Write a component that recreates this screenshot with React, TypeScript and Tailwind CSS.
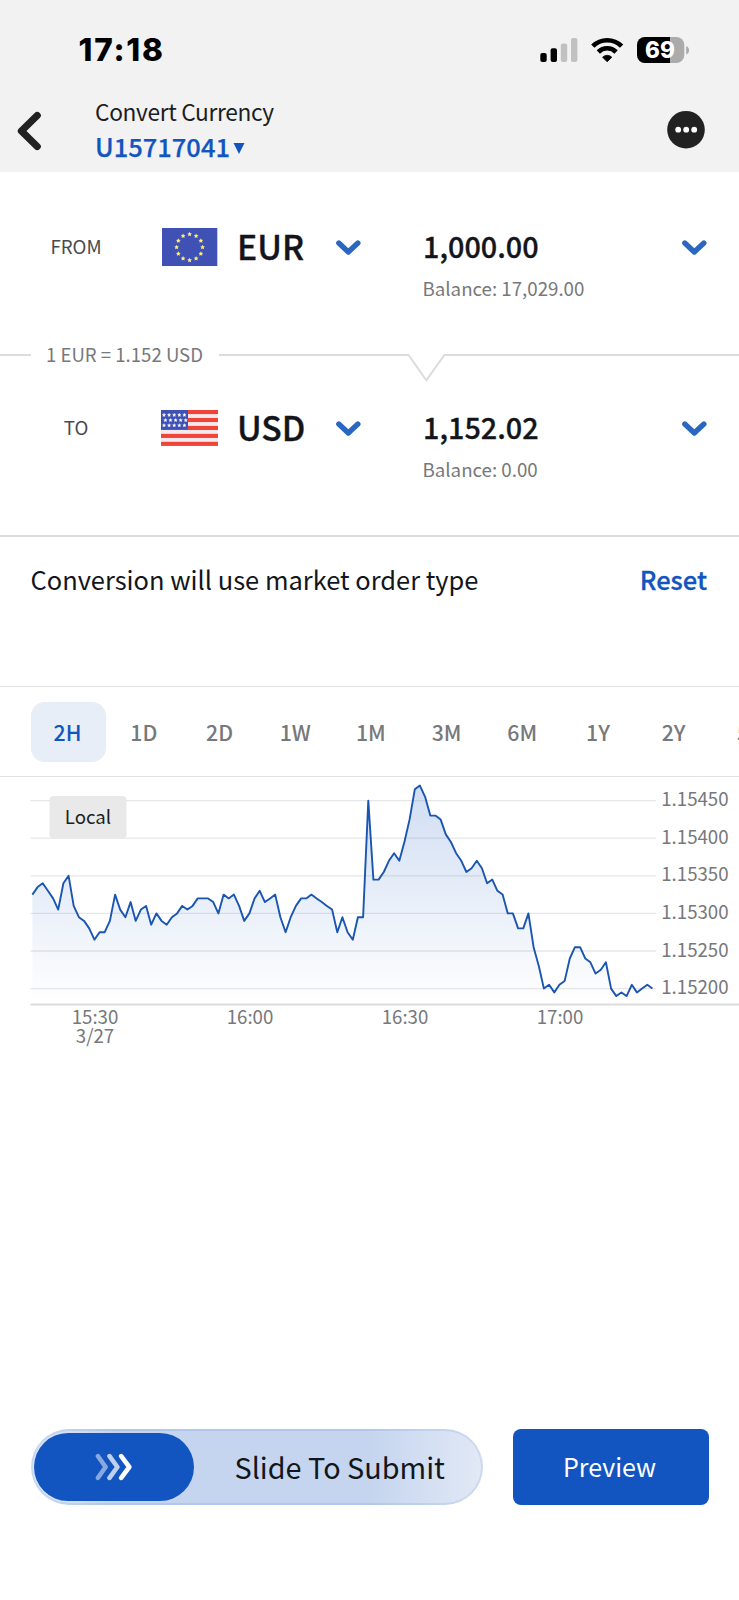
import React from "react";

const ticks = [
  25, 27, 28, 26, 24, 21, 28, 30, 22, 19, 18, 16, 13, 15, 15, 18, 25, 21, 19, 23, 18, 21, 22, 17, 20, 18, 17, 19, 20, 22,
  21, 22, 24, 24, 24, 23, 20, 25, 24, 25, 22, 18, 20, 24, 26, 23, 24, 25, 19, 15, 19, 22, 24, 24, 25, 24, 23, 22, 21, 15,
  19, 15, 13, 19, 19, 50, 29, 29, 31, 34, 36, 34, 39, 45, 53, 54, 51, 46, 46, 45, 41, 39, 36, 34, 31, 32, 34, 32, 28, 29,
  26, 25, 20, 20, 16, 16, 20, 11, 6, 0, 1, -1, 1, 2, 8, 11, 11, 8, 7, 4, 5, 7, 0, -2, -1, -2, 1, -1, 0, 1, 0,
];

const CHART_TOP = 777;
const yOf = (t: number) => 988.6 - CHART_TOP - t * 3.76;
const xOf = (i: number) => 32.4 + i * 5.167;
const line = ticks.map((t, i) => `${xOf(i).toFixed(1)},${yOf(t).toFixed(1)}`).join(" ");
const area = `${xOf(0)},${1004 - CHART_TOP} ${line} ${xOf(120).toFixed(1)},${1004 - CHART_TOP}`;

const priceLabels = ["1.15450", "1.15400", "1.15350", "1.15300", "1.15250", "1.15200"];
const timeLabels = [
  { x: 95, label: "15:30" },
  { x: 250, label: "16:00" },
  { x: 405, label: "16:30" },
  { x: 560, label: "17:00" },
];
const ranges = ["1D", "2D", "1W", "1M", "3M", "6M", "1Y", "2Y"];

function Chevron() {
  return (
    <svg className="mt-px h-[16px] w-[25px] shrink-0" viewBox="0 0 25 16" fill="none">
      <path d="M2.8 3 12.3 12 21.9 3" stroke="#2a67c0" strokeWidth="5.3" strokeLinecap="round" strokeLinejoin="round" />
    </svg>
  );
}

function star(cx: number, cy: number, r: number) {
  return Array.from({ length: 10 }, (_, k) => {
    const a = (Math.PI * k) / 5 - Math.PI / 2;
    const q = k % 2 ? r * 0.5 : r;
    return `${(cx + q * Math.cos(a)).toFixed(2)},${(cy + q * Math.sin(a)).toFixed(2)}`;
  }).join(" ");
}

function EuFlag() {
  return (
    <svg className="h-[38px] w-[57px] shrink-0" viewBox="0 0 57 38">
      <rect x="1" y="0" width="55.3" height="38" fill="#3f51b5" />
      {Array.from({ length: 12 }, (_, k) => {
        const a = (Math.PI * k) / 6;
        return <polygon key={k} points={star(28.6 + 13 * Math.sin(a), 19.2 - 13 * Math.cos(a), 2.5)} fill="#ffee70" />;
      })}
    </svg>
  );
}

function UsFlag() {
  return (
    <svg className="h-[36px] w-[57px] shrink-0" viewBox="0 0 57 36">
      <rect width="57" height="36" fill="#f5e9ee" />
      {[0, 1, 2, 3, 4].map((k) => (
        <rect key={k} y={k * 7.95} width="57" height="4.1" fill="#f04438" />
      ))}
      <rect width="27" height="19.6" fill="#3f51b5" />
      {[0, 1, 2].map((r) =>
        [0, 1, 2, 3, 4].map((c) => (
          <polygon key={`${r}-${c}`} points={star(3 + c * 5.1 + (r === 1 ? 1.4 : 0), 5 + r * 5.2, 1.8)} fill="#fff" stroke="#fff" strokeWidth="0.3" />
        )),
      )}
    </svg>
  );
}

function StatusBar() {
  return (
    <div className="flex h-[99px] items-center pl-[78.5px] pr-[49px]">
      <div className="font-['Inter',sans-serif] text-[31.5px] font-extrabold leading-none tracking-[1.8px] text-black">17:18</div>
      <svg className="ml-auto h-[26px] w-[150px]" viewBox="540 36 150 26">
        <rect x="540.3" y="52" width="6.4" height="9" rx="2" />
        <rect x="550.6" y="47.2" width="6.4" height="13.8" rx="2" />
        <rect x="560.8" y="42.4" width="6.4" height="18.6" rx="2" fill="#c1c1c1" />
        <rect x="571" y="37" width="6.4" height="24" rx="2" fill="#c1c1c1" />
        <g fill="none" stroke="#000" strokeWidth="4.6">
          <path d="M592.8 45.2a20.3 20.3 0 0 1 28.8 0" />
          <path d="M598.3 51a12.6 12.6 0 0 1 17.8 0" />
        </g>
        <path d="M607.2 60.8 602.6 56.2a6.6 6.6 0 0 1 9.2 0Z" stroke="#000" strokeWidth=".8" strokeLinejoin="round" />
        <clipPath id="battery">
          <rect x="637" y="36" width="47.3" height="26" rx="8" />
        </clipPath>
        <g clipPath="url(#battery)">
          <rect x="637" y="36" width="48" height="26" fill="#ababab" />
          <rect x="637" y="36" width="33" height="26" />
        </g>
        <path d="M686.2 45.2c3.8 1 3.8 7.2 0 8.2Z" fill="#ababab" />
        <text x="660" y="57" textAnchor="middle" className="font-['Inter',sans-serif] text-[22.5px] font-extrabold" fill="#fff">69</text>
      </svg>
    </div>
  );
}

function NavBar() {
  return (
    <div className="flex h-[73px] items-start">
      <svg className="ml-[16px] mt-[12px] h-[40px] w-[27px]" viewBox="0 0 27 40" fill="none">
        <path d="M21.2 4.5 5.4 20 21.2 35.5" stroke="#222" strokeWidth="7.2" strokeLinecap="round" strokeLinejoin="round" />
      </svg>
      <div className="ml-[52px] flex flex-col">
        <div className="h-[29px] text-[22.7px] leading-[25px] tracking-[-0.33px] text-[#1c1d22]">Convert Currency</div>
        <div className="flex h-[36px] items-center text-[25.5px] font-medium leading-[36px] text-[#1255c0] [-webkit-text-stroke:0.25px]">
          U15717041
          <svg className="ml-[3px] mt-[4px] h-[11px] w-[12px]" viewBox="0 0 12 11">
            <path d="M.5 0h11L6 11Z" fill="#1255c0" />
          </svg>
        </div>
      </div>
      <svg className="ml-auto mr-[33px] mt-[11px] h-[40px] w-[39px]" viewBox="0 0 39 40">
        <circle cx="19" cy="19.7" r="18.8" fill="#222" />
        <circle cx="11.2" cy="19.7" r="2.9" fill="#fff" />
        <circle cx="19.2" cy="19.7" r="2.9" fill="#fff" />
        <circle cx="27.2" cy="19.7" r="2.9" fill="#fff" />
      </svg>
    </div>
  );
}

function CurrencyRow({ label, flag, code, amount, balance }: { label: string; flag: React.ReactNode; code: string; amount: string; balance: string }) {
  return (
    <div>
      <div className="flex h-[40px] items-center">
        <div className="w-[151px] pb-[2px] pl-px text-center text-[18.7px] text-[#4a4b4f]">{label}</div>
        <div className="ml-[10px]">{flag}</div>
        <div className="ml-[19px] w-[99px] pb-[2px] text-[33.7px] font-medium leading-[40px] [-webkit-text-stroke:0.35px]">{code}</div>
        <Chevron />
        <div className="ml-[62px] pb-[2px] text-[28.8px] font-medium leading-[40px] [-webkit-text-stroke:0.3px]">{amount}</div>
        <div className="ml-auto mr-[32px]">
          <Chevron />
        </div>
      </div>
      <div className="pl-[422.5px] text-[18.7px] leading-[41px] text-[#77787b]">Balance: {balance}</div>
    </div>
  );
}

function RateDivider() {
  return (
    <div className="flex h-[50px] items-center">
      <div className="h-[2px] w-[31px] bg-[#dcdcdc]" />
      <div className="w-[188px] pb-[2px] pr-px text-center text-[18.6px] text-[#77787b]">1 EUR = 1.152 USD</div>
      <svg className="h-[50px] w-[520px] overflow-visible" viewBox="0 0 520 50" fill="none">
        <path d="M0 25H189.5L207.3 50.3 225.5 25H520" stroke="#dcdcdc" strokeWidth="2" />
      </svg>
    </div>
  );
}

function Chart() {
  return (
    <svg className="block h-[290px] w-[739px]" viewBox="0 0 739 290">
      <defs>
        <linearGradient id="fill" gradientUnits="userSpaceOnUse" x1="0" y1="8" x2="0" y2="227">
          <stop offset="0" stopColor="#1255c0" stopOpacity=".2" />
          <stop offset="1" stopColor="#1255c0" stopOpacity="0" />
        </linearGradient>
      </defs>
      {priceLabels.map((p, i) => (
        <g key={p}>
          <path d={`M30.5 ${yOf(50 - i * 10)}H656`} stroke="#e6e7e9" strokeWidth="1.3" />
          <text x="661.2" y={yOf(50 - i * 10) + 5.6} className="text-[18.7px]" fill="#77787b">{p}</text>
        </g>
      ))}
      <polygon points={area} fill="url(#fill)" />
      <path d="M30.5 227.5H739" stroke="#dcdcdc" strokeWidth="2" />
      <polyline points={line} fill="none" stroke="#1a55b0" strokeWidth="1.9" strokeLinejoin="round" />
      <rect x="49.5" y="19" width="77" height="42.5" rx="4" fill="#e9e9e9" />
      <text x="88" y="47" textAnchor="middle" className="text-[18.7px]" fill="#1c1d22">Local</text>
      {timeLabels.map((t) => (
        <text key={t.label} x={t.x} y="247" textAnchor="middle" className="text-[18.7px]" fill="#77787b">{t.label}</text>
      ))}
      <text x="95" y="266" textAnchor="middle" className="text-[18.7px]" fill="#77787b">3/27</text>
    </svg>
  );
}

function Footer() {
  return (
    <div className="flex h-[76px] pl-[31px]">
      <div className="flex w-[452px] items-center rounded-full border-2 border-[#1255c0]/10 bg-[linear-gradient(90deg,#dfe8f6_0%,#c5d5ef_18%,#c5d5ef_75%,#e2e9f6_100%)] bg-origin-border">
        <div className="ml-[1px] flex h-[68px] w-[159.5px] shrink-0 items-center justify-center rounded-full bg-[#1255c0]">
          <svg className="h-[28px] w-[38px]" viewBox="0 0 38 28" fill="none" strokeWidth="4.6" strokeLinecap="round" strokeLinejoin="round">
            <path d="M3 3.2 10.6 14 3 24.8" stroke="#88a9df" />
            <path d="M14.5 3.2 22.4 14 14.5 24.8" stroke="#c0d1ee" />
            <path d="M26.2 3.2 34.3 14 26.2 24.8" stroke="#fff" />
          </svg>
        </div>
        <div className="ml-[41px] pb-px text-[28.8px] leading-[40px] whitespace-nowrap">Slide To Submit</div>
      </div>
      <button className="ml-[30px] flex w-[196px] items-center justify-center rounded-[8px] bg-[#1255c0] pb-px pr-[3px] text-[25px] text-white">Preview</button>
    </div>
  );
}

export default function App() {
  return (
    <div className="h-[1600px] w-[739px] overflow-hidden bg-white font-['Noto_Sans_CJK_SC',sans-serif] text-[#13151b]">
      <header className="h-[172px] bg-[#f2f2f2]">
        <StatusBar />
        <NavBar />
      </header>
      <section className="h-[365px] border-b-2 border-[#dcdcdc] pt-[55px]">
        <div className="h-[103px]">
          <CurrencyRow label="FROM" flag={<EuFlag />} code="EUR" amount="1,000.00" balance="17,029.00" />
        </div>
        <RateDivider />
        <div className="pt-[28px]">
          <CurrencyRow label="TO" flag={<UsFlag />} code="USD" amount="1,152.02" balance="0.00" />
        </div>
      </section>
      <section className="flex h-[149px] justify-between pl-[30.5px] pr-[32px] pt-[22px] text-[25.45px] leading-[40px]">
        <div>Conversion will use market order type</div>
        <div className="font-medium text-[#1255c0] [-webkit-text-stroke:0.3px]">Reset</div>
      </section>
      <nav className="flex h-[91px] items-center overflow-hidden border-y border-[#e0e0e0] pl-[31px] text-[21.3px] font-medium text-[#77787b]">
        <div className="flex h-[60px] w-[75px] shrink-0 items-center justify-center rounded-[14px] bg-[#e7eef8] pr-[2px] text-[#1255c0]">2H</div>
        {ranges.map((r) => (
          <div key={r} className="flex h-[60px] w-[75.7px] shrink-0 items-center justify-center">
            {r}
          </div>
        ))}
        <div className="shrink-0 pl-[25.5px]">5Y</div>
      </nav>
      <Chart />
      <div className="h-[362px]" />
      <Footer />
    </div>
  );
}
